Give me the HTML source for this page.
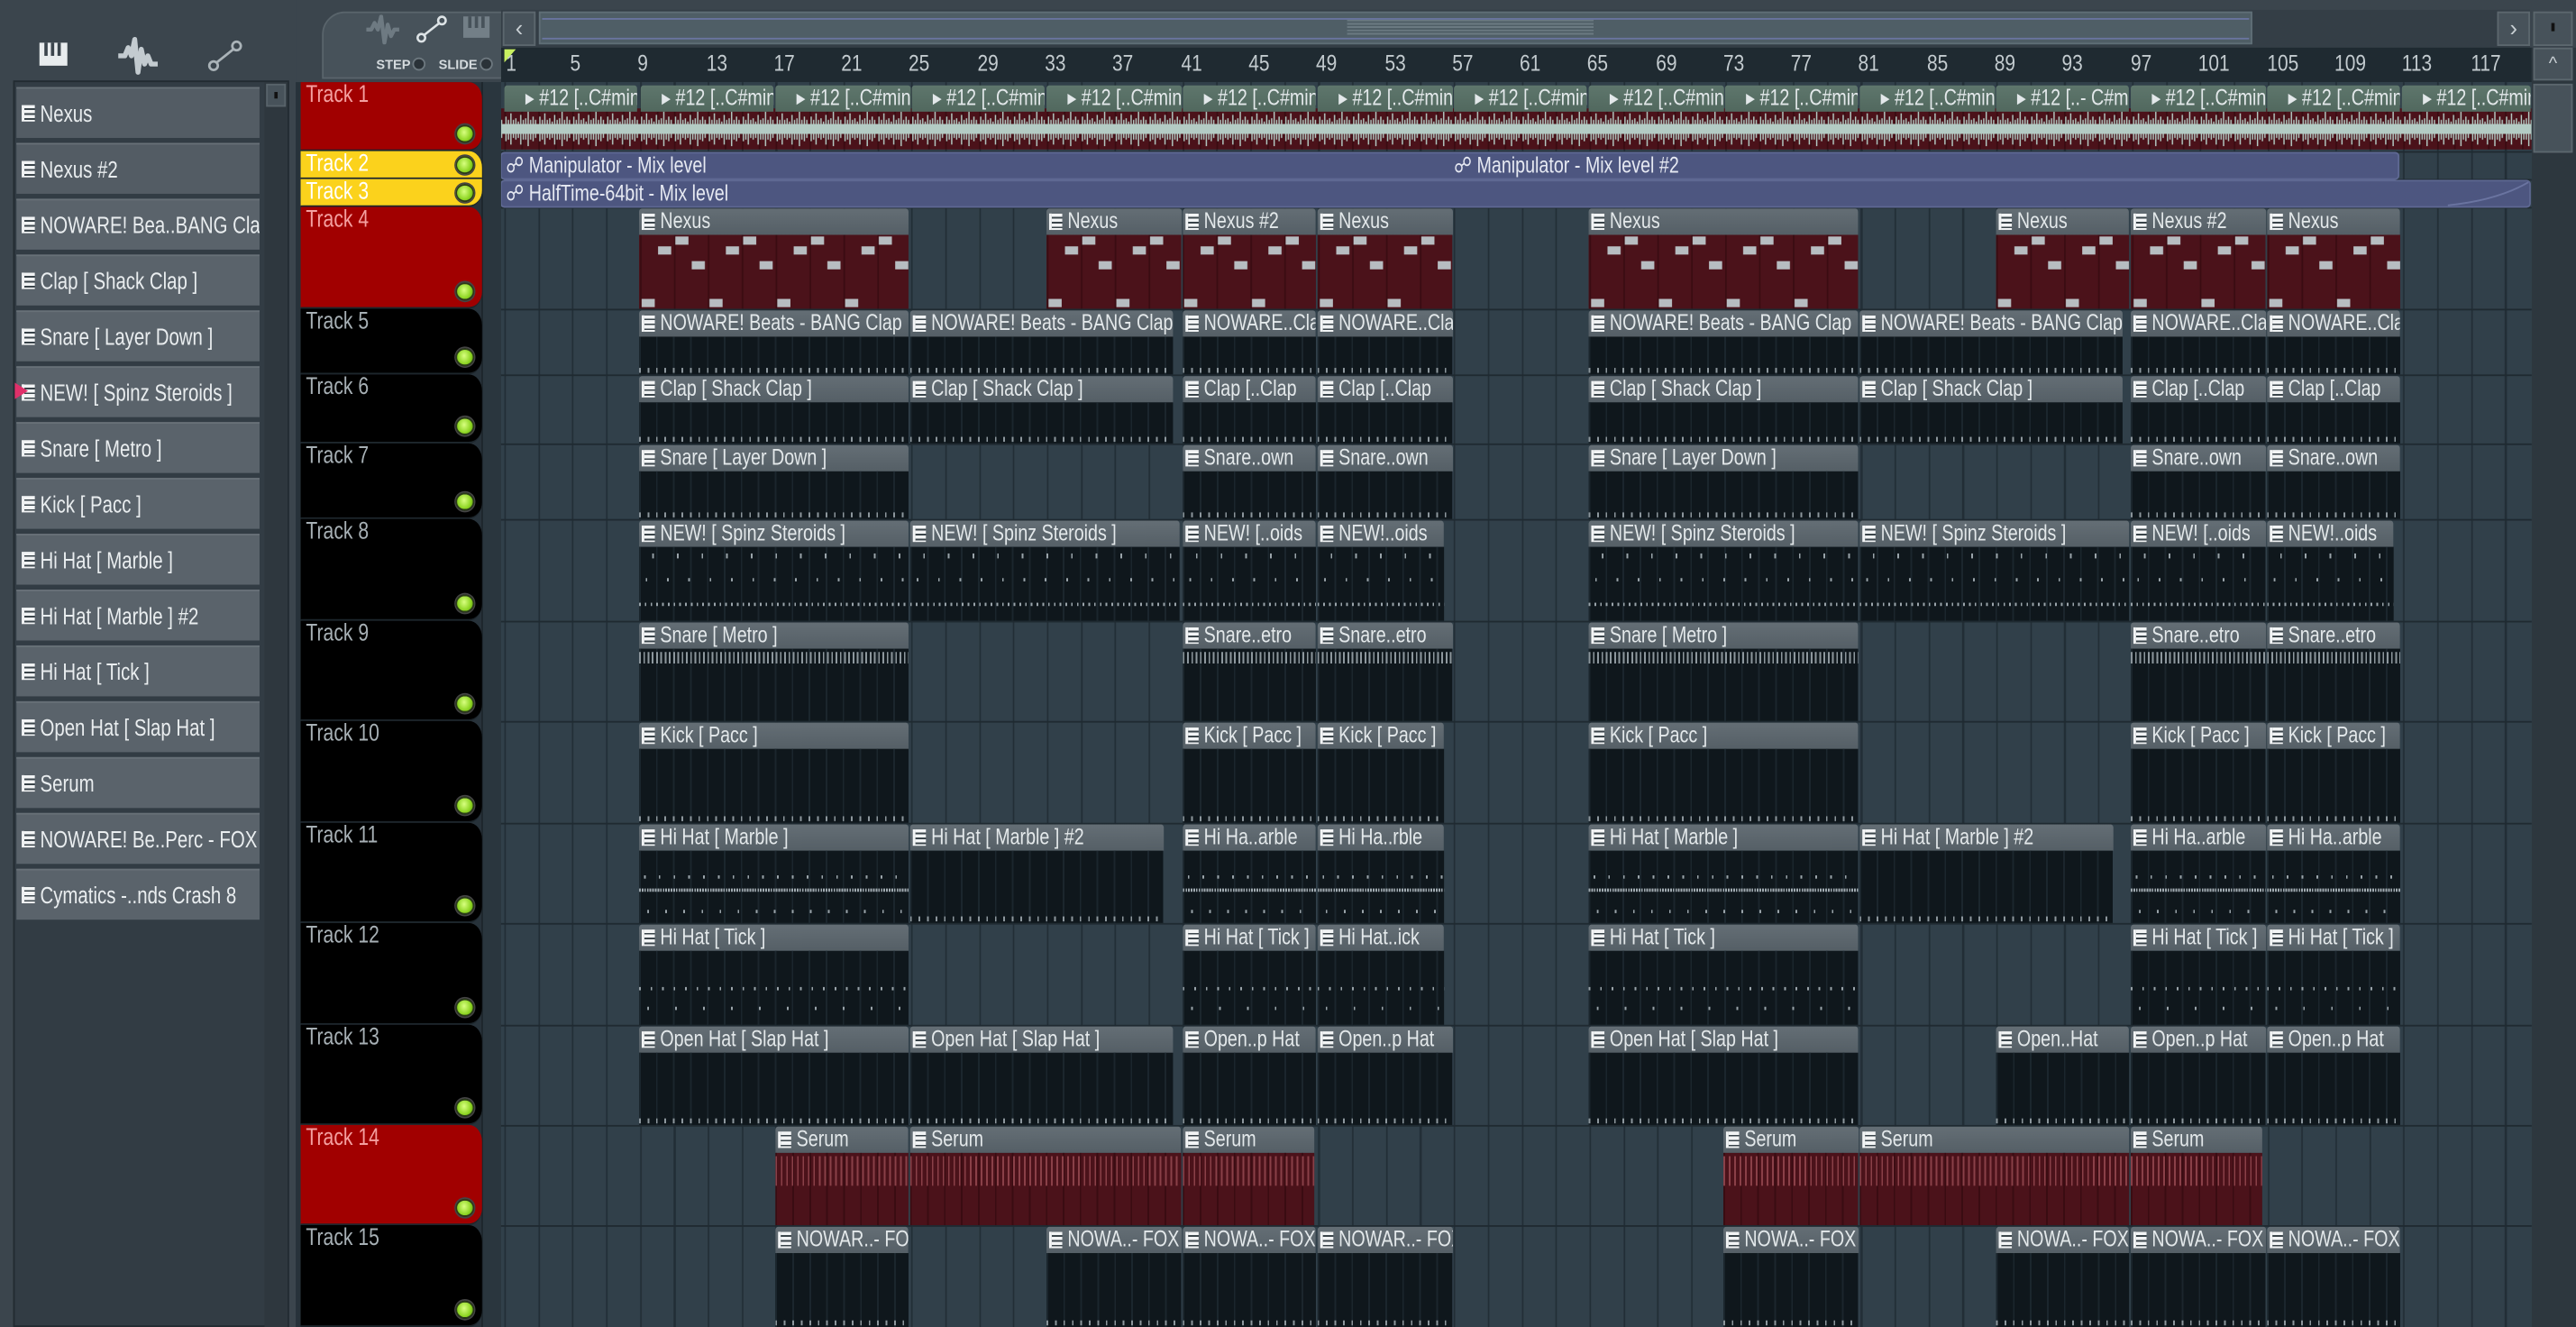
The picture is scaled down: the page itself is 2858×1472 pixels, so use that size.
<!DOCTYPE html>
<html><head><meta charset="utf-8"><style>
*{margin:0;padding:0;box-sizing:border-box}
html,body{width:2858px;height:1472px;overflow:hidden;background:#3a444c}
#root{position:absolute;left:0;top:0;width:1568px;height:808px;transform:scale(1.82270,1.82178);transform-origin:0 0;background:#3b454d;font-family:"Liberation Sans",sans-serif;overflow:hidden}
.a{position:absolute}
.ch{position:absolute;left:10px;width:185px;height:31px;transform:scaleX(.8);transform-origin:0 0;background:#5a636b;border-top:1px solid #687178;color:#e9edef;font-size:14px;line-height:30px;padding-left:18px;white-space:nowrap;overflow:hidden}
.ico{position:absolute;width:10px;height:10px;background:repeating-linear-gradient(#f2f4f5 0 2px,#3a444a 2px 3px);border-left:2px solid #f2f4f5}
.ch .ico{left:4px;top:10px}
.th{position:absolute;left:183px;width:137.5px;transform:scaleX(.8);transform-origin:0 0;border-radius:0 10px 10px 0;font-size:14.5px;padding-left:4px;line-height:17px;border-bottom:1px solid #1d262c}
.led{position:absolute;right:6px;bottom:4px;width:14px;height:11px;border-radius:50%;background:radial-gradient(circle at 45% 40%,#d8ff80,#8cd421 60%,#4f8a10);border:1px solid #2a3a1a;box-shadow:0 0 0 1px #444}
#grid{position:absolute;left:305px;top:50px;width:1236px;height:758px;background:#31404a repeating-linear-gradient(90deg,#222e36 0 1px,transparent 1px 20.64px);background-position:2px 0}
.rl{position:absolute;left:0;width:1236px;height:1px;background:#1f2a31}
.c{position:absolute}
.h{position:absolute;left:0;width:125%;top:0;height:16px;transform:scaleX(.8);transform-origin:0 0;background:linear-gradient(#646e75,#555f66);border-radius:2px 2px 0 0;color:#e3e8ea;font-size:13.5px;line-height:16px;padding-left:16px;white-space:nowrap;overflow:hidden}
.h .ico{left:2px;top:3px}
.g{background:linear-gradient(#5e766c,#51685e)}
.b{position:absolute;left:0;right:0;top:16px;bottom:0}
.d{background:#0f171c repeating-linear-gradient(90deg,#1b262d 0 1px,transparent 1px 10.32px)}
.d::after{content:"";position:absolute;left:0;right:0;bottom:1px;height:3px;background:repeating-linear-gradient(90deg,#8d979d 0 1px,transparent 1px 5.16px)}
.t8{background:repeating-linear-gradient(90deg,#9aa4aa 0 1px,transparent 1px 3.5px) 0 80%/100% 2px no-repeat,repeating-linear-gradient(90deg,#9aa4aa 0 1px,transparent 1px 13px) 4px 45%/100% 2px no-repeat,repeating-linear-gradient(90deg,#9aa4aa 0 1px,transparent 1px 15px) 8px 10%/100% 3px no-repeat,#0f171c repeating-linear-gradient(90deg,#1b262d 0 1px,transparent 1px 10.32px)}
.t9{background:repeating-linear-gradient(90deg,#8d979d 0 1px,transparent 1px 2.6px) 0 5%/100% 7px no-repeat,#0f171c repeating-linear-gradient(90deg,#1b262d 0 1px,transparent 1px 10.32px)}
.t11{background:repeating-linear-gradient(90deg,#a0aab0 0 1px,transparent 1px 1.6px) 0 55%/100% 2px no-repeat,repeating-linear-gradient(90deg,#9aa4aa 0 1px,transparent 1px 9px) 3px 35%/100% 2px no-repeat,repeating-linear-gradient(90deg,#9aa4aa 0 1px,transparent 1px 11px) 5px 85%/100% 2px no-repeat,#0f171c repeating-linear-gradient(90deg,#1b262d 0 1px,transparent 1px 10.32px)}
.t12{background:repeating-linear-gradient(90deg,#9aa4aa 0 1px,transparent 1px 7px) 0 50%/100% 2px no-repeat,repeating-linear-gradient(90deg,#9aa4aa 0 1px,transparent 1px 17px) 5px 80%/100% 2px no-repeat,#0f171c repeating-linear-gradient(90deg,#1b262d 0 1px,transparent 1px 10.32px)}
.s{background:repeating-linear-gradient(90deg,#8a4048 0 1px,transparent 1px 3.3px) 0 2px/100% 18px no-repeat,#4b121a repeating-linear-gradient(90deg,#3a0c12 0 1px,transparent 1px 10.32px)}
.rt{position:absolute;top:30px;font-size:13.5px;color:#c3cbcf;line-height:18px;transform:scaleX(.85);transform-origin:0 0}
.al{position:absolute;font-size:13.5px;color:#e6e9f2;line-height:17px;transform:scaleX(.8);transform-origin:0 0;white-space:nowrap}
</style></head><body><div id="root">

<!-- left panel -->
<div class="a" style="left:0;top:0;width:180px;height:808px;background:#3b454d"></div>
<div class="a" style="left:24px;top:26px;width:17px;height:14px;background:#e8ecee"></div>
<div class="a" style="left:27px;top:26px;width:2px;height:8px;background:#3b454d"></div>
<div class="a" style="left:31px;top:26px;width:2px;height:8px;background:#3b454d"></div>
<div class="a" style="left:35px;top:26px;width:2px;height:8px;background:#3b454d"></div>
<svg class="a" style="left:70px;top:22px" width="28" height="24" viewBox="0 0 28 24"><path d="M2 12h4l2-5 2 5 2-10 2 20 2-14 2 9 2-5 2 5h4" fill="none" stroke="#c3cbd0" stroke-width="3" stroke-linejoin="round"/></svg>
<svg class="a" style="left:126px;top:24px" width="22" height="20"><circle cx="4" cy="16" r="2.6" fill="none" stroke="#aab3b8" stroke-width="1.5"/><circle cx="18" cy="4" r="2.6" fill="none" stroke="#aab3b8" stroke-width="1.5"/><path d="M6 14L16 6" stroke="#aab3b8" stroke-width="1.5"/></svg>
<div class="a" style="left:8px;top:49px;width:168px;height:759px;background:#323c44;border:1px solid #222b31"></div>
<div class="a" style="left:161px;top:50px;width:14px;height:758px;background:#2e373e"></div>
<div class="a" style="left:162px;top:51px;width:12px;height:14px;background:#47525a;border:1px solid #58636a"></div>
<div class="a" style="left:167px;top:56px;width:2px;height:4px;background:#111"></div>

<div class="ch" style="top:53px;background:#535c64"><span class="ico"></span>Nexus</div>
<div class="ch" style="top:87px;background:#535c64"><span class="ico"></span>Nexus #2</div>
<div class="ch" style="top:121px"><span class="ico"></span>NOWARE! Bea..BANG Clap</div>
<div class="ch" style="top:155px"><span class="ico"></span>Clap [ Shack Clap ]</div>
<div class="ch" style="top:189px"><span class="ico"></span>Snare [ Layer Down ]</div>
<div class="ch" style="top:223px"><span class="ico"></span>NEW! [ Spinz Steroids ]</div>
<div class="a" style="left:9px;top:233px;width:0;height:0;border-left:8px solid #e0306a;border-top:5px solid transparent;border-bottom:5px solid transparent"></div>
<div class="ch" style="top:257px"><span class="ico"></span>Snare [ Metro ]</div>
<div class="ch" style="top:291px"><span class="ico"></span>Kick [ Pacc ]</div>
<div class="ch" style="top:325px"><span class="ico"></span>Hi Hat [ Marble ]</div>
<div class="ch" style="top:359px"><span class="ico"></span>Hi Hat [ Marble ] #2</div>
<div class="ch" style="top:393px"><span class="ico"></span>Hi Hat [ Tick ]</div>
<div class="ch" style="top:427px"><span class="ico"></span>Open Hat [ Slap Hat ]</div>
<div class="ch" style="top:461px"><span class="ico"></span>Serum</div>
<div class="ch" style="top:495px"><span class="ico"></span>NOWARE! Be..Perc - FOX</div>
<div class="ch" style="top:529px"><span class="ico"></span>Cymatics -..nds Crash 8</div>

<!-- top toolbar -->
<div class="a" style="left:180px;top:0;width:1388px;height:50px;background:#3b454d"></div>
<div class="a" style="left:196px;top:7px;width:110px;height:41px;background:#47525a;border-radius:14px 0 0 0;border:1px solid #59646b"></div>
<svg class="a" style="left:222px;top:9px" width="22" height="18"><path d="M1 9h3l2-4 2 4 2-8 2 16 2-11 2 7 2-4h3" fill="none" stroke="#6e7a82" stroke-width="2.4" stroke-linejoin="round"/></svg>
<svg class="a" style="left:253px;top:9px" width="20" height="18"><circle cx="3.5" cy="14" r="2.3" fill="none" stroke="#dde3e6" stroke-width="1.4"/><circle cx="16" cy="3.5" r="2.3" fill="none" stroke="#dde3e6" stroke-width="1.4"/><path d="M5 12.5L14.5 5" stroke="#dde3e6" stroke-width="1.4"/></svg>
<div class="a" style="left:282px;top:10px;width:16px;height:13px;background:#737f87"></div>
<div class="a" style="left:285px;top:10px;width:2px;height:7px;background:#47525a"></div>
<div class="a" style="left:289px;top:10px;width:2px;height:7px;background:#47525a"></div>
<div class="a" style="left:293px;top:10px;width:2px;height:7px;background:#47525a"></div>
<div class="a" style="left:229px;top:35px;font-size:8px;color:#d5dbde;font-weight:bold">STEP</div>
<div class="a" style="left:251px;top:35px;width:8px;height:8px;border-radius:50%;background:#2a3238;border:1px solid #6d787f"></div>
<div class="a" style="left:267px;top:35px;font-size:8px;color:#d5dbde;font-weight:bold">SLIDE</div>
<div class="a" style="left:292px;top:35px;width:8px;height:8px;border-radius:50%;background:#2a3238;border:1px solid #6d787f"></div>

<div class="a" style="left:305px;top:6px;width:1235px;height:23px;background:#343e46"></div>
<div class="a" style="left:306px;top:7px;width:20px;height:21px;background:#47525a;border:1px solid #5c676e;color:#c8cfd3;font-size:14px;text-align:center;line-height:18px">&lsaquo;</div>
<div class="a" style="left:328px;top:7px;width:1043px;height:20px;background:#4f5e66;border:1px solid #5f6e76"></div>
<div class="a" style="left:330px;top:11px;width:1039px;height:1px;background:#6a75a0"></div>
<div class="a" style="left:330px;top:23px;width:1039px;height:1px;background:#6a75a0"></div>
<div class="a" style="left:820px;top:12px;width:150px;height:10px;background:repeating-linear-gradient(#6b7a82 0 1px,transparent 1px 2px)"></div>
<div class="a" style="left:1520px;top:7px;width:20px;height:21px;background:#47525a;border:1px solid #5c676e;color:#c8cfd3;font-size:14px;text-align:center;line-height:18px">&rsaquo;</div>
<div class="a" style="left:1542px;top:7px;width:24px;height:21px;background:#47525a;border:1px solid #5c676e"></div>
<div class="a" style="left:1553px;top:14px;width:2px;height:5px;background:#111"></div>

<!-- ruler -->
<div class="a" style="left:305px;top:29px;width:1236px;height:21px;background:#1f2a31"></div>
<div class="a" style="left:307px;top:30px;width:0;height:0;border-left:7px solid #c8f060;border-bottom:8px solid transparent"></div>
<div class="rt" style="left:308px">1</div><div class="rt" style="left:347px">5</div><div class="rt" style="left:388px">9</div><div class="rt" style="left:430px">13</div><div class="rt" style="left:471px">17</div><div class="rt" style="left:512px">21</div><div class="rt" style="left:553px">25</div><div class="rt" style="left:595px">29</div><div class="rt" style="left:636px">33</div><div class="rt" style="left:677px">37</div><div class="rt" style="left:719px">41</div><div class="rt" style="left:760px">45</div><div class="rt" style="left:801px">49</div><div class="rt" style="left:843px">53</div><div class="rt" style="left:884px">57</div><div class="rt" style="left:925px">61</div><div class="rt" style="left:966px">65</div><div class="rt" style="left:1008px">69</div><div class="rt" style="left:1049px">73</div><div class="rt" style="left:1090px">77</div><div class="rt" style="left:1131px">81</div><div class="rt" style="left:1173px">85</div><div class="rt" style="left:1214px">89</div><div class="rt" style="left:1255px">93</div><div class="rt" style="left:1297px">97</div><div class="rt" style="left:1338px">101</div><div class="rt" style="left:1380px">105</div><div class="rt" style="left:1421px">109</div><div class="rt" style="left:1462px">113</div><div class="rt" style="left:1504px">117</div>

<!-- right scrollbar -->
<div class="a" style="left:1541px;top:29px;width:27px;height:779px;background:#2d373e"></div>
<div class="a" style="left:1542px;top:29px;width:24px;height:20px;background:#47525a;border:1px solid #5c676e;color:#c8cfd3;font-size:11px;text-align:center;line-height:18px">^</div>
<div class="a" style="left:1542px;top:51px;width:24px;height:42px;background:#47525a;border:1px solid #5c676e"></div>

<!-- track header column -->
<div class="a" style="left:180px;top:50px;width:125px;height:758px;background:#27323a"></div>
<div class="a" style="left:293px;top:50px;width:12px;height:758px;background:#2a363e;border-left:1px solid #1d262c"></div>

<div class="th" style="top:50px;height:42px;background:#a10000;color:#f4a0a0">Track 1<span class="led"></span></div>
<div class="th" style="top:92px;height:17px;background:#fbd21c;color:#fff;border-radius:0 10px 0 0">Track 2<span class="led" style="bottom:2px"></span></div>
<div class="th" style="top:109px;height:17px;background:#fbd21c;color:#fff;border-radius:0 0 10px 0">Track 3<span class="led" style="bottom:2px"></span></div>
<div class="th" style="top:126px;height:62px;background:#a10000;color:#f4a0a0">Track 4<span class="led"></span></div>
<div class="th" style="top:188px;height:40px;background:#000;color:#a7b0b5">Track 5<span class="led"></span></div>
<div class="th" style="top:228px;height:42px;background:#000;color:#a7b0b5">Track 6<span class="led"></span></div>
<div class="th" style="top:270px;height:46px;background:#000;color:#a7b0b5">Track 7<span class="led"></span></div>
<div class="th" style="top:316px;height:62px;background:#000;color:#a7b0b5">Track 8<span class="led"></span></div>
<div class="th" style="top:378px;height:61px;background:#000;color:#a7b0b5">Track 9<span class="led"></span></div>
<div class="th" style="top:439px;height:62px;background:#000;color:#a7b0b5">Track 10<span class="led"></span></div>
<div class="th" style="top:501px;height:61px;background:#000;color:#a7b0b5">Track 11<span class="led"></span></div>
<div class="th" style="top:562px;height:62px;background:#000;color:#a7b0b5">Track 12<span class="led"></span></div>
<div class="th" style="top:624px;height:61px;background:#000;color:#a7b0b5">Track 13<span class="led"></span></div>
<div class="th" style="top:685px;height:61px;background:#a10000;color:#f4a0a0">Track 14<span class="led"></span></div>
<div class="th" style="top:746px;height:62px;background:#000;color:#a7b0b5">Track 15<span class="led"></span></div>

<!-- grid -->
<div id="grid">
<div class="rl" style="top:42px"></div><div class="rl" style="top:59px"></div><div class="rl" style="top:76px"></div><div class="rl" style="top:138px"></div><div class="rl" style="top:178px"></div><div class="rl" style="top:220px"></div><div class="rl" style="top:266px"></div><div class="rl" style="top:328px"></div><div class="rl" style="top:389px"></div><div class="rl" style="top:451px"></div><div class="rl" style="top:512px"></div><div class="rl" style="top:574px"></div><div class="rl" style="top:635px"></div><div class="rl" style="top:696px"></div>

<svg class="a" style="left:0;top:0" width="1236" height="138">
<defs>
<pattern id="wv" patternUnits="userSpaceOnUse" x="2" y="16" width="20.64" height="26">
<rect width="20.64" height="26" fill="#4b121a"/><rect width="1" height="26" fill="#3a0c12"/><rect x="10.32" width="1" height="26" fill="#3a0c12"/>
<path d="M0 9.5h20.64v6H0z" fill="#b4cbc4"/>
<path d="M1 5v15M2.5 7v12M4 3v19M5.5 7v11M7 6v13M8.5 8v10M10 4v18M11.5 7v12M13 6v13M14.5 2v21M16 7v12M17.5 5v15M19 7v11" stroke="#b4cbc4" stroke-width="0.8"/>
</pattern>
<pattern id="nx" patternUnits="userSpaceOnUse" x="2" y="93" width="41.28" height="45">
<rect width="41.28" height="45" fill="#4b121a"/><rect width="1" height="45" fill="#3a0c12"/><rect x="20.64" width="1" height="45" fill="#3a0c12"/>
<rect x="1" y="39" width="8" height="5" fill="#b7bdc1"/><rect x="11" y="7" width="8" height="5" fill="#b7bdc1"/><rect x="21.5" y="1" width="8" height="5" fill="#b7bdc1"/><rect x="31.5" y="16" width="8" height="5" fill="#b7bdc1"/>
</pattern>
</defs>
<rect x="0" y="16" width="1236" height="25" fill="url(#wv)"/>
<rect x="0" y="43" width="1155" height="16" rx="2" fill="#4d5680" stroke="#5e6892" stroke-width="1"/>
<rect x="0" y="60" width="1235" height="16" rx="2" fill="#4d5680" stroke="#5e6892" stroke-width="1"/>
<path d="M1185 75 Q1215 72 1234 61" fill="none" stroke="#6a74a0"/>
<g fill="url(#nx)">
<rect x="84" y="93" width="164" height="45"/>
<rect x="332" y="93" width="82" height="45"/><rect x="415" y="93" width="81" height="45"/><rect x="497" y="93" width="82" height="45"/>
<rect x="662" y="93" width="164" height="45"/>
<rect x="910" y="93" width="81" height="45"/><rect x="992" y="93" width="82" height="45"/><rect x="1075" y="93" width="81" height="45"/>
</g>
</svg>

<!-- Track 1 headers -->
<div class="c" style="top:2px;left:2px;width:81px;height:14px"><div class="h g">&#x25B8; #12 [..C#min</div></div>
<div class="c" style="top:2px;left:85px;width:81px;height:14px"><div class="h g">&#x25B8; #12 [..C#min</div></div>
<div class="c" style="top:2px;left:167px;width:82px;height:14px"><div class="h g">&#x25B8; #12 [..C#min</div></div>
<div class="c" style="top:2px;left:250px;width:81px;height:14px"><div class="h g">&#x25B8; #12 [..C#min</div></div>
<div class="c" style="top:2px;left:332px;width:82px;height:14px"><div class="h g">&#x25B8; #12 [..C#min</div></div>
<div class="c" style="top:2px;left:415px;width:81px;height:14px"><div class="h g">&#x25B8; #12 [..C#min</div></div>
<div class="c" style="top:2px;left:497px;width:82px;height:14px"><div class="h g">&#x25B8; #12 [..C#min</div></div>
<div class="c" style="top:2px;left:580px;width:81px;height:14px"><div class="h g">&#x25B8; #12 [..C#min</div></div>
<div class="c" style="top:2px;left:662px;width:82px;height:14px"><div class="h g">&#x25B8; #12 [..C#min</div></div>
<div class="c" style="top:2px;left:745px;width:81px;height:14px"><div class="h g">&#x25B8; #12 [..C#min</div></div>
<div class="c" style="top:2px;left:827px;width:82px;height:14px"><div class="h g">&#x25B8; #12 [..C#min</div></div>
<div class="c" style="top:2px;left:910px;width:81px;height:14px"><div class="h g">&#x25B8; #12 [..- C#min</div></div>
<div class="c" style="top:2px;left:992px;width:82px;height:14px"><div class="h g">&#x25B8; #12 [..C#min</div></div>
<div class="c" style="top:2px;left:1075px;width:81px;height:14px"><div class="h g">&#x25B8; #12 [..C#min</div></div>
<div class="c" style="top:2px;left:1157px;width:78px;height:14px"><div class="h g">&#x25B8; #12 [..C#min</div></div>

<div class="al" style="left:3px;top:42px">&#x260D; Manipulator - Mix level</div>
<div class="al" style="left:580px;top:42px">&#x260D; Manipulator - Mix level #2</div>
<div class="al" style="left:3px;top:59px">&#x260D; HalfTime-64bit - Mix level</div>

<!-- Track 4 headers -->
<div class="c" style="top:77px;left:84px;width:164px;height:16px"><div class="h"><span class="ico"></span>Nexus</div></div>
<div class="c" style="top:77px;left:332px;width:82px;height:16px"><div class="h"><span class="ico"></span>Nexus</div></div>
<div class="c" style="top:77px;left:415px;width:81px;height:16px"><div class="h"><span class="ico"></span>Nexus #2</div></div>
<div class="c" style="top:77px;left:497px;width:82px;height:16px"><div class="h"><span class="ico"></span>Nexus</div></div>
<div class="c" style="top:77px;left:662px;width:164px;height:16px"><div class="h"><span class="ico"></span>Nexus</div></div>
<div class="c" style="top:77px;left:910px;width:81px;height:16px"><div class="h"><span class="ico"></span>Nexus</div></div>
<div class="c" style="top:77px;left:992px;width:82px;height:16px"><div class="h"><span class="ico"></span>Nexus #2</div></div>
<div class="c" style="top:77px;left:1075px;width:81px;height:16px"><div class="h"><span class="ico"></span>Nexus</div></div>

<!-- Track 5 -->
<div class="c" style="top:139px;left:84px;width:164px;height:39px"><div class="h"><span class="ico"></span>NOWARE! Beats - BANG Clap</div><div class="b d"></div></div>
<div class="c" style="top:139px;left:249px;width:160px;height:39px"><div class="h"><span class="ico"></span>NOWARE! Beats - BANG Clap</div><div class="b d"></div></div>
<div class="c" style="top:139px;left:415px;width:81px;height:39px"><div class="h"><span class="ico"></span>NOWARE..Clap</div><div class="b d"></div></div>
<div class="c" style="top:139px;left:497px;width:82px;height:39px"><div class="h"><span class="ico"></span>NOWARE..Clap</div><div class="b d"></div></div>
<div class="c" style="top:139px;left:662px;width:164px;height:39px"><div class="h"><span class="ico"></span>NOWARE! Beats - BANG Clap</div><div class="b d"></div></div>
<div class="c" style="top:139px;left:827px;width:160px;height:39px"><div class="h"><span class="ico"></span>NOWARE! Beats - BANG Clap</div><div class="b d"></div></div>
<div class="c" style="top:139px;left:992px;width:82px;height:39px"><div class="h"><span class="ico"></span>NOWARE..Clap</div><div class="b d"></div></div>
<div class="c" style="top:139px;left:1075px;width:81px;height:39px"><div class="h"><span class="ico"></span>NOWARE..Clap</div><div class="b d"></div></div>

<!-- Track 6 -->
<div class="c" style="top:179px;left:84px;width:164px;height:41px"><div class="h"><span class="ico"></span>Clap [ Shack Clap ]</div><div class="b d"></div></div>
<div class="c" style="top:179px;left:249px;width:160px;height:41px"><div class="h"><span class="ico"></span>Clap [ Shack Clap ]</div><div class="b d"></div></div>
<div class="c" style="top:179px;left:415px;width:81px;height:41px"><div class="h"><span class="ico"></span>Clap [..Clap</div><div class="b d"></div></div>
<div class="c" style="top:179px;left:497px;width:82px;height:41px"><div class="h"><span class="ico"></span>Clap [..Clap</div><div class="b d"></div></div>
<div class="c" style="top:179px;left:662px;width:164px;height:41px"><div class="h"><span class="ico"></span>Clap [ Shack Clap ]</div><div class="b d"></div></div>
<div class="c" style="top:179px;left:827px;width:160px;height:41px"><div class="h"><span class="ico"></span>Clap [ Shack Clap ]</div><div class="b d"></div></div>
<div class="c" style="top:179px;left:992px;width:82px;height:41px"><div class="h"><span class="ico"></span>Clap [..Clap</div><div class="b d"></div></div>
<div class="c" style="top:179px;left:1075px;width:81px;height:41px"><div class="h"><span class="ico"></span>Clap [..Clap</div><div class="b d"></div></div>

<!-- Track 7 -->
<div class="c" style="top:221px;left:84px;width:164px;height:45px"><div class="h"><span class="ico"></span>Snare [ Layer Down ]</div><div class="b d"></div></div>
<div class="c" style="top:221px;left:415px;width:81px;height:45px"><div class="h"><span class="ico"></span>Snare..own</div><div class="b d"></div></div>
<div class="c" style="top:221px;left:497px;width:82px;height:45px"><div class="h"><span class="ico"></span>Snare..own</div><div class="b d"></div></div>
<div class="c" style="top:221px;left:662px;width:164px;height:45px"><div class="h"><span class="ico"></span>Snare [ Layer Down ]</div><div class="b d"></div></div>
<div class="c" style="top:221px;left:992px;width:82px;height:45px"><div class="h"><span class="ico"></span>Snare..own</div><div class="b d"></div></div>
<div class="c" style="top:221px;left:1075px;width:81px;height:45px"><div class="h"><span class="ico"></span>Snare..own</div><div class="b d"></div></div>

<!-- Track 8 -->
<div class="c" style="top:267px;left:84px;width:164px;height:61px"><div class="h"><span class="ico"></span>NEW! [ Spinz Steroids ]</div><div class="b t8"></div></div>
<div class="c" style="top:267px;left:249px;width:164px;height:61px"><div class="h"><span class="ico"></span>NEW! [ Spinz Steroids ]</div><div class="b t8"></div></div>
<div class="c" style="top:267px;left:415px;width:81px;height:61px"><div class="h"><span class="ico"></span>NEW! [..oids</div><div class="b t8"></div></div>
<div class="c" style="top:267px;left:497px;width:77px;height:61px"><div class="h"><span class="ico"></span>NEW!..oids</div><div class="b t8"></div></div>
<div class="c" style="top:267px;left:662px;width:164px;height:61px"><div class="h"><span class="ico"></span>NEW! [ Spinz Steroids ]</div><div class="b t8"></div></div>
<div class="c" style="top:267px;left:827px;width:164px;height:61px"><div class="h"><span class="ico"></span>NEW! [ Spinz Steroids ]</div><div class="b t8"></div></div>
<div class="c" style="top:267px;left:992px;width:82px;height:61px"><div class="h"><span class="ico"></span>NEW! [..oids</div><div class="b t8"></div></div>
<div class="c" style="top:267px;left:1075px;width:77px;height:61px"><div class="h"><span class="ico"></span>NEW!..oids</div><div class="b t8"></div></div>

<!-- Track 9 -->
<div class="c" style="top:329px;left:84px;width:164px;height:60px"><div class="h"><span class="ico"></span>Snare [ Metro ]</div><div class="b t9"></div></div>
<div class="c" style="top:329px;left:415px;width:81px;height:60px"><div class="h"><span class="ico"></span>Snare..etro</div><div class="b t9"></div></div>
<div class="c" style="top:329px;left:497px;width:82px;height:60px"><div class="h"><span class="ico"></span>Snare..etro</div><div class="b t9"></div></div>
<div class="c" style="top:329px;left:662px;width:164px;height:60px"><div class="h"><span class="ico"></span>Snare [ Metro ]</div><div class="b t9"></div></div>
<div class="c" style="top:329px;left:992px;width:82px;height:60px"><div class="h"><span class="ico"></span>Snare..etro</div><div class="b t9"></div></div>
<div class="c" style="top:329px;left:1075px;width:81px;height:60px"><div class="h"><span class="ico"></span>Snare..etro</div><div class="b t9"></div></div>

<!-- Track 10 -->
<div class="c" style="top:390px;left:84px;width:164px;height:61px"><div class="h"><span class="ico"></span>Kick [ Pacc ]</div><div class="b d"></div></div>
<div class="c" style="top:390px;left:415px;width:81px;height:61px"><div class="h"><span class="ico"></span>Kick [ Pacc ]</div><div class="b d"></div></div>
<div class="c" style="top:390px;left:497px;width:77px;height:61px"><div class="h"><span class="ico"></span>Kick [ Pacc ]</div><div class="b d"></div></div>
<div class="c" style="top:390px;left:662px;width:164px;height:61px"><div class="h"><span class="ico"></span>Kick [ Pacc ]</div><div class="b d"></div></div>
<div class="c" style="top:390px;left:992px;width:82px;height:61px"><div class="h"><span class="ico"></span>Kick [ Pacc ]</div><div class="b d"></div></div>
<div class="c" style="top:390px;left:1075px;width:81px;height:61px"><div class="h"><span class="ico"></span>Kick [ Pacc ]</div><div class="b d"></div></div>

<!-- Track 11 -->
<div class="c" style="top:452px;left:84px;width:164px;height:60px"><div class="h"><span class="ico"></span>Hi Hat [ Marble ]</div><div class="b t11"></div></div>
<div class="c" style="top:452px;left:249px;width:154px;height:60px"><div class="h"><span class="ico"></span>Hi Hat [ Marble ] #2</div><div class="b d"></div></div>
<div class="c" style="top:452px;left:415px;width:81px;height:60px"><div class="h"><span class="ico"></span>Hi Ha..arble</div><div class="b t11"></div></div>
<div class="c" style="top:452px;left:497px;width:77px;height:60px"><div class="h"><span class="ico"></span>Hi Ha..rble</div><div class="b t11"></div></div>
<div class="c" style="top:452px;left:662px;width:164px;height:60px"><div class="h"><span class="ico"></span>Hi Hat [ Marble ]</div><div class="b t11"></div></div>
<div class="c" style="top:452px;left:827px;width:154px;height:60px"><div class="h"><span class="ico"></span>Hi Hat [ Marble ] #2</div><div class="b d"></div></div>
<div class="c" style="top:452px;left:992px;width:82px;height:60px"><div class="h"><span class="ico"></span>Hi Ha..arble</div><div class="b t11"></div></div>
<div class="c" style="top:452px;left:1075px;width:81px;height:60px"><div class="h"><span class="ico"></span>Hi Ha..arble</div><div class="b t11"></div></div>

<!-- Track 12 -->
<div class="c" style="top:513px;left:84px;width:164px;height:61px"><div class="h"><span class="ico"></span>Hi Hat [ Tick ]</div><div class="b t12"></div></div>
<div class="c" style="top:513px;left:415px;width:81px;height:61px"><div class="h"><span class="ico"></span>Hi Hat [ Tick ]</div><div class="b t12"></div></div>
<div class="c" style="top:513px;left:497px;width:77px;height:61px"><div class="h"><span class="ico"></span>Hi Hat..ick</div><div class="b t12"></div></div>
<div class="c" style="top:513px;left:662px;width:164px;height:61px"><div class="h"><span class="ico"></span>Hi Hat [ Tick ]</div><div class="b t12"></div></div>
<div class="c" style="top:513px;left:992px;width:82px;height:61px"><div class="h"><span class="ico"></span>Hi Hat [ Tick ]</div><div class="b t12"></div></div>
<div class="c" style="top:513px;left:1075px;width:81px;height:61px"><div class="h"><span class="ico"></span>Hi Hat [ Tick ]</div><div class="b t12"></div></div>

<!-- Track 13 -->
<div class="c" style="top:575px;left:84px;width:164px;height:60px"><div class="h"><span class="ico"></span>Open Hat [ Slap Hat ]</div><div class="b d"></div></div>
<div class="c" style="top:575px;left:249px;width:160px;height:60px"><div class="h"><span class="ico"></span>Open Hat [ Slap Hat ]</div><div class="b d"></div></div>
<div class="c" style="top:575px;left:415px;width:81px;height:60px"><div class="h"><span class="ico"></span>Open..p Hat</div><div class="b d"></div></div>
<div class="c" style="top:575px;left:497px;width:82px;height:60px"><div class="h"><span class="ico"></span>Open..p Hat</div><div class="b d"></div></div>
<div class="c" style="top:575px;left:662px;width:164px;height:60px"><div class="h"><span class="ico"></span>Open Hat [ Slap Hat ]</div><div class="b d"></div></div>
<div class="c" style="top:575px;left:910px;width:81px;height:60px"><div class="h"><span class="ico"></span>Open..Hat</div><div class="b d"></div></div>
<div class="c" style="top:575px;left:992px;width:82px;height:60px"><div class="h"><span class="ico"></span>Open..p Hat</div><div class="b d"></div></div>
<div class="c" style="top:575px;left:1075px;width:81px;height:60px"><div class="h"><span class="ico"></span>Open..p Hat</div><div class="b d"></div></div>

<!-- Track 14 -->
<div class="c" style="top:636px;left:167px;width:81px;height:60px"><div class="h"><span class="ico"></span>Serum</div><div class="b s"></div></div>
<div class="c" style="top:636px;left:249px;width:165px;height:60px"><div class="h"><span class="ico"></span>Serum</div><div class="b s"></div></div>
<div class="c" style="top:636px;left:415px;width:80px;height:60px"><div class="h"><span class="ico"></span>Serum</div><div class="b s"></div></div>
<div class="c" style="top:636px;left:744px;width:82px;height:60px"><div class="h"><span class="ico"></span>Serum</div><div class="b s"></div></div>
<div class="c" style="top:636px;left:827px;width:164px;height:60px"><div class="h"><span class="ico"></span>Serum</div><div class="b s"></div></div>
<div class="c" style="top:636px;left:992px;width:80px;height:60px"><div class="h"><span class="ico"></span>Serum</div><div class="b s"></div></div>

<!-- Track 15 -->
<div class="c" style="top:697px;left:167px;width:81px;height:61px"><div class="h"><span class="ico"></span>NOWAR..- FOX</div><div class="b d"></div></div>
<div class="c" style="top:697px;left:332px;width:82px;height:61px"><div class="h"><span class="ico"></span>NOWA..- FOX</div><div class="b d"></div></div>
<div class="c" style="top:697px;left:415px;width:81px;height:61px"><div class="h"><span class="ico"></span>NOWA..- FOX</div><div class="b d"></div></div>
<div class="c" style="top:697px;left:497px;width:82px;height:61px"><div class="h"><span class="ico"></span>NOWAR..- FOX</div><div class="b d"></div></div>
<div class="c" style="top:697px;left:744px;width:82px;height:61px"><div class="h"><span class="ico"></span>NOWA..- FOX</div><div class="b d"></div></div>
<div class="c" style="top:697px;left:910px;width:81px;height:61px"><div class="h"><span class="ico"></span>NOWA..- FOX</div><div class="b d"></div></div>
<div class="c" style="top:697px;left:992px;width:82px;height:61px"><div class="h"><span class="ico"></span>NOWA..- FOX</div><div class="b d"></div></div>
<div class="c" style="top:697px;left:1075px;width:81px;height:61px"><div class="h"><span class="ico"></span>NOWA..- FOX</div><div class="b d"></div></div>
</div>

</div></body></html>
